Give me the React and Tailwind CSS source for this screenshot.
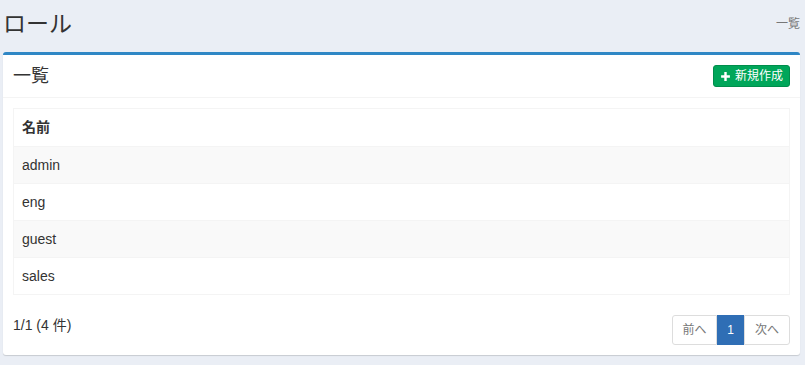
const ROLES = ['admin', 'eng', 'guest', 'sales']

const font = { fontFamily: '"Liberation Sans", "Noto Sans CJK JP", sans-serif' }

export default function App() {
  return (
    <div className="min-h-[365px] bg-[#eaeef5] text-[#333] pt-[7px]" style={font}>
      <div className="flex items-center justify-between pl-[3px] pr-[5px] h-[34px]">
        <h1 className="text-[23px] leading-none text-[#333]">ロール</h1>
        <span className="text-[12px] text-[#777]">一覧</span>
      </div>

      <div className="mt-[11px] ml-[3px] mr-[5px] bg-white border-t-[3px] border-[#2f87c5] rounded-[3px] shadow-[0_1px_1px_rgba(0,0,0,0.15)]">
        <div className="flex items-center justify-between px-[10px] h-[43px] border-b border-[#f4f4f4]">
          <h3 className="text-[18px] leading-none text-[#333]">一覧</h3>
          <button className="flex items-center gap-[4px] h-[22px] px-[6px] rounded-[3px] bg-[#00a65a] border border-[#008d4c] text-white text-[12px]">
            <svg width="11" height="11" viewBox="0 0 10 10">
              <path d="M5 1v8M1 5h8" stroke="white" strokeWidth="2.2" />
            </svg>
            新規作成
          </button>
        </div>

        <div className="px-[10px] pt-[10px]">
          <table className="w-full border border-[#f4f4f4] border-collapse text-[14px]">
            <thead>
              <tr className="h-[38px]">
                <th className="text-left font-bold px-[8px] border border-[#f4f4f4]">名前</th>
              </tr>
            </thead>
            <tbody>
              {ROLES.map((r, i) => (
                <tr key={r} className={i % 2 === 0 ? 'h-[37px] bg-[#f9f9f9]' : 'h-[37px] bg-white'}>
                  <td className="px-[8px] border border-[#f4f4f4]">{r}</td>
                </tr>
              ))}
            </tbody>
          </table>
        </div>

        <div className="flex items-start justify-between px-[10px] pt-[20px] pb-[10px]">
          <span className="text-[14px] leading-[20px] text-[#333]">1/1 (4 件)</span>
          <div className="flex h-[30px] text-[12px]">
            <span className="flex items-center justify-center w-[45px] border border-[#ddd] rounded-l-[3px] text-[#777] bg-white">前へ</span>
            <span className="flex items-center justify-center w-[27px] bg-[#2f6eb5] border border-[#2f6eb5] text-white">1</span>
            <span className="flex items-center justify-center w-[46px] border border-[#ddd] rounded-r-[3px] text-[#777] bg-white">次へ</span>
          </div>
        </div>
      </div>
    </div>
  )
}
